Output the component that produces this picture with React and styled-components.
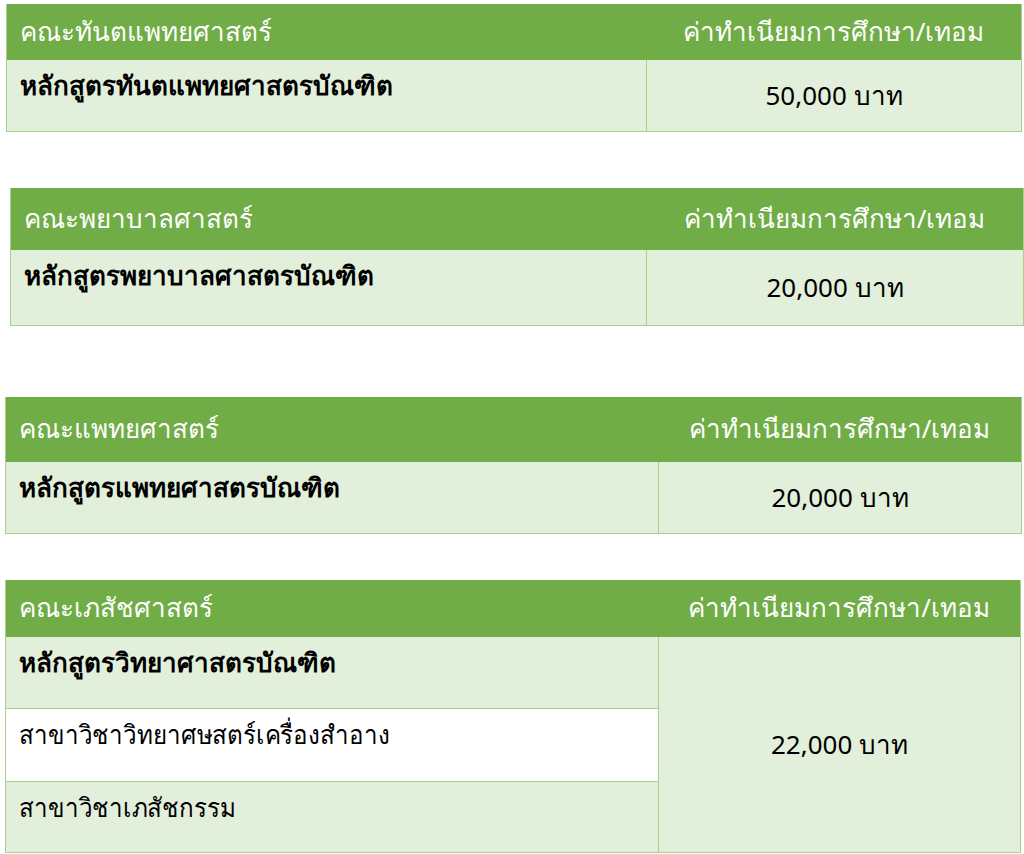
import React from "react";
import styled, { createGlobalStyle } from "styled-components";

const GlobalStyle = createGlobalStyle`
  html, body {
    margin: 0;
    padding: 0;
    background: #ffffff;
  }
  body {
    font-family: "Noto Sans", "DejaVu Sans", sans-serif;
    color: #000;
  }
`;

const faculties = [
  {
    name: "คณะทันตแพทยศาสตร์",
    rows: [{ text: "หลักสูตรทันตแพทยศาสตรบัณฑิต", bold: true }],
    fee: "50,000 บาท",
    left: 6,
    right: 2,
    top: 4,
    cols: "639px 1fr",
    head: 56,
    rowH: [71],
  },
  {
    name: "คณะพยาบาลศาสตร์",
    rows: [{ text: "หลักสูตรพยาบาลศาสตรบัณฑิต", bold: true }],
    fee: "20,000 บาท",
    left: 10,
    right: 0,
    top: 56,
    cols: "635px 1fr",
    head: 62,
    rowH: [75],
  },
  {
    name: "คณะแพทยศาสตร์",
    rows: [{ text: "หลักสูตรแพทยศาสตรบัณฑิต", bold: true }],
    fee: "20,000 บาท",
    left: 5,
    right: 2,
    top: 71,
    cols: "652px 1fr",
    head: 65,
    rowH: [71],
  },
  {
    name: "คณะเภสัชศาสตร์",
    rows: [
      { text: "หลักสูตรวิทยาศาสตรบัณฑิต", bold: true },
      { text: "สาขาวิชาวิทยาศษสตร์เครื่องสำอาง", white: true },
      { text: "สาขาวิชาเภสัชกรรม" },
    ],
    fee: "22,000 บาท",
    left: 5,
    right: 3,
    top: 46,
    cols: "652px 1fr",
    head: 57,
    rowH: [71, 73, 71],
  },
];

const Page = styled.div`
  display: flex;
  flex-direction: column;
  width: 1024px;
`;

const Table = styled.div`
  display: grid;
  grid-template-columns: ${(p) => p.$cols};
  grid-template-rows: ${(p) => p.$rows};
  margin: ${(p) => p.$top}px ${(p) => p.$right}px 0 ${(p) => p.$left}px;
  border: 1px solid #a9d08e;
  border-top: none;
  background: #e2efda;
`;

const HeadCell = styled.div`
  background: #70ad47;
  color: #ffffff;
  font-size: 26px;
  display: flex;
  align-items: center;
  justify-content: ${(p) => (p.$center ? "center" : "flex-start")};
  padding: 0 13px 2px;
  white-space: nowrap;
`;

const NameCell = styled.div`
  background: ${(p) => (p.$white ? "#ffffff" : "#e2efda")};
  border-top: ${(p) => (p.$first ? "none" : "1px solid #a9d08e")};
  padding: 7px 13px 0;
  font-size: 26px;
  font-weight: ${(p) => (p.$bold ? 700 : 400)};
  line-height: 36px;
  white-space: nowrap;
`;

const Narrow = styled.span`
  display: inline-block;
  transform: scaleX(0.93);
  transform-origin: left center;
`;

const FeeCell = styled.div`
  grid-column: 2;
  grid-row: 2 / span ${(p) => p.$span};
  border-left: 1px solid #a9d08e;
  display: flex;
  align-items: center;
  justify-content: center;
  font-size: 26px;
`;

export default function App() {
  return (
    <Page>
      <GlobalStyle />
      {faculties.map((f) => (
        <Table
          key={f.name}
          $cols={f.cols}
          $rows={[f.head, ...f.rowH].map((h) => h + "px").join(" ")}
          $top={f.top}
          $left={f.left}
          $right={f.right}
        >
          <HeadCell>{f.name}</HeadCell>
          <HeadCell $center>ค่าทำเนียมการศึกษา/เทอม</HeadCell>
          {f.rows.map((r, i) => (
            <NameCell
              key={r.text}
              $bold={r.bold}
              $white={r.white}
              $first={i === 0}
              style={{ gridRow: i + 2 }}
            >
              {r.bold ? r.text : <Narrow>{r.text}</Narrow>}
            </NameCell>
          ))}
          <FeeCell $span={f.rows.length}>{f.fee}</FeeCell>
        </Table>
      ))}
    </Page>
  );
}
